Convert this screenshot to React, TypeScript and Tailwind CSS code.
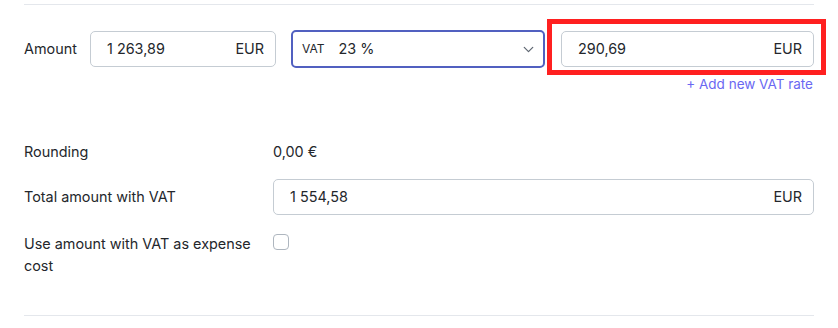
import { ChevronDown } from "lucide-react";

function MoneyInput({ value, className = "" }: { value: string; className?: string }) {
  return (
    <div
      className={`flex h-9 items-center justify-between rounded-[5px] border border-[#c5ccd3] bg-white pl-4 pr-[11px] text-[#24272c] ${className}`}
    >
      <span>{value}</span>
      <span>EUR</span>
    </div>
  );
}

export default function App() {
  return (
    <div className="min-h-[328px] w-[838px] bg-white font-['Inter',sans-serif] text-[14.4px] text-[#24272c]">
      <div className="mx-6 w-[790px] pt-1">
        <div className="h-px bg-[#e4e7ec]" />

        {/* Amount + VAT row */}
        <div className="mt-[25px] flex items-center">
          <span className="w-[66px] shrink-0">Amount</span>
          <MoneyInput value="1 263,89" className="w-[186px]" />
          <div className="ml-[15px] flex h-[38px] w-[254px] items-center rounded-[5px] border-2 border-[#5160c0] pl-[9px] pr-[6px]">
            <span className="text-xs">VAT</span>
            <span className="ml-[14px] flex-1">23 %</span>
            <ChevronDown size={17} strokeWidth={1.75} className="text-[#5f6772]" />
          </div>
          <div className="relative ml-4 w-[253px]">
            <MoneyInput value="290,69" />
            {/* highlight annotation */}
            <div className="pointer-events-none absolute -left-[14px] -right-3 -top-3 -bottom-[8px] border-[5px] border-[#ff2020]" />
          </div>
        </div>
        <div className="mt-[6px] pr-px text-right text-[13.5px] text-[#6a68f2]">+ Add new VAT rate</div>

        {/* Rounding */}
        <div className="mt-[47px] flex items-center">
          <span className="w-[249px] shrink-0">Rounding</span>
          <span>0,00 €</span>
        </div>

        {/* Total */}
        <div className="mt-4 flex items-center">
          <span className="w-[249px] shrink-0">Total amount with VAT</span>
          <MoneyInput value="1 554,58" className="flex-1" />
        </div>

        {/* Checkbox */}
        <div className="mt-[18px] flex items-start">
          <span className="w-[249px] shrink-0 leading-[22px]">
            Use amount with VAT as expense cost
          </span>
          <span className="mt-[1px] block h-4 w-4 rounded-[4px] border border-[#aeb6bf] bg-white" />
        </div>

        <div className="mt-[38px] h-px bg-[#e4e7ec]" />
      </div>
    </div>
  );
}
